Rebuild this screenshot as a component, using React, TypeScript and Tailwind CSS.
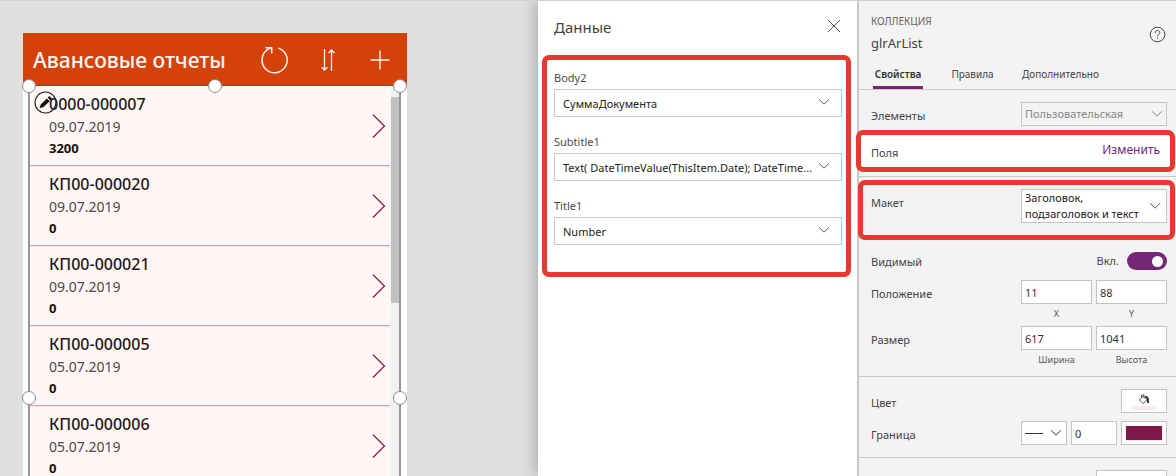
import React from "react";

const reports = [
  { number: "0000-000007", date: "09.07.2019", sum: "3200" },
  { number: "КП00-000020", date: "09.07.2019", sum: "0" },
  { number: "КП00-000021", date: "09.07.2019", sum: "0" },
  { number: "КП00-000005", date: "05.07.2019", sum: "0" },
  { number: "КП00-000006", date: "05.07.2019", sum: "0" },
];

const fields = [
  { id: "body2", label: "Body2", value: "СуммаДокумента" },
  { id: "subtitle1", label: "Subtitle1", value: "Text( DateTimeValue(ThisItem.Date); DateTime..." },
  { id: "title1", label: "Title1", value: "Number" },
];

function ChevronDown({ className }: { className: string }) {
  return (
    <svg className={className} width="12" height="8" viewBox="0 0 12 8" fill="none" stroke="currentColor" aria-hidden="true">
      <path d="M1 1.2 6 6.2 11 1.2" />
    </svg>
  );
}

function Handle({ className }: { className: string }) {
  return <span className={"absolute size-[14px] rounded-full border border-[#8a8a8a] bg-white " + className} />;
}

function PhoneHeader() {
  return (
    <header className="flex h-[52px] items-center bg-[#d4420a] pt-px pr-[17px] pl-[10px] text-[#fff4f2]">
      <h1 className="flex-1 text-[21px] leading-[30px] font-medium whitespace-nowrap">Авансовые отчеты</h1>
      <button type="button" aria-label="Обновить" className="mr-8">
        <svg width="28" height="28" viewBox="0 0 28 28" fill="none" stroke="currentColor" strokeWidth="1.5">
          <path d="M17.3 2.1A12.6 12.6 0 1 1 7.4 3.2L10.5 1.6" />
          <path d="M4.3 1.7H10.7V7.5" />
        </svg>
      </button>
      <button type="button" aria-label="Сортировать" className="mr-[35px]">
        <svg width="14" height="24" viewBox="0 0 14 24" fill="none" stroke="currentColor" strokeWidth="1.3">
          <path d="M3.5 1V22M.6 19.3 3.5 22.2 6.4 19.3" />
          <path d="M10.5 23V2M7.6 5 10.5 2 13.4 5" />
        </svg>
      </button>
      <button type="button" aria-label="Добавить">
        <svg width="20" height="20" viewBox="0 0 20 20" fill="none" stroke="currentColor" strokeWidth="1.4">
          <path d="M.5 10H19.5M10 .5V19.5" />
        </svg>
      </button>
    </header>
  );
}

function Gallery() {
  return (
    <div className="relative mr-[6px] ml-[5px] flex border-x-2 border-t border-x-[#969696] border-t-[#555] bg-[#fff6f5]">
      <ul className="flex-1">
        {reports.map((r) => (
          <li key={r.number} className="flex h-20 items-center border-b border-b-[#dd9fb8] pr-1 pl-[19px] shadow-[0_1px_0_#f6dfe6]">
            <div className="relative z-10 flex-1">
              <div className="text-[16px] leading-6 font-medium text-[#1e1b1b]">{r.number}</div>
              <div className="text-[14px] leading-[22px] text-[#4c4848]">{r.date}</div>
              <div className="text-[13px] leading-[21px] font-bold text-[#151313]">{r.sum}</div>
            </div>
            <button type="button" aria-label="Открыть">
              <svg width="14" height="24" viewBox="0 0 14 24" fill="none" stroke="#93265a" strokeWidth="1.4">
                <path d="M1 .8 12.4 12 1 23.4" />
              </svg>
            </button>
          </li>
        ))}
      </ul>
      <div className="w-[9px] bg-[#f1f1f1] pt-[11px]">
        <div className="ml-px h-[206px] bg-[#c1c1c1]" />
      </div>
      <svg className="absolute top-[5px] left-1" width="23" height="23" viewBox="0 0 23 23" aria-hidden="true">
        <circle cx="11.5" cy="11.5" r="10.5" fill="none" stroke="#222" strokeWidth="1.1" />
        <path d="M5.6 17.3 6.8 13.4 12.8 7.4 15.6 10.2 9.5 16.1Z M13.6 6.6 14.8 5.5Q15.4 5 16 5.6L17.4 7Q18 7.6 17.4 8.2L16.3 9.4Z" fill="#111" />
      </svg>
      <Handle className="-top-[7px] -left-[8px]" />
      <Handle className="-top-[7px] left-1/2 -ml-[7px]" />
      <Handle className="-top-[7px] -right-[8px]" />
      <Handle className="top-[305px] -left-[8px]" />
      <Handle className="top-[305px] -right-[8px]" />
    </div>
  );
}

function DataPanel() {
  return (
    <aside className="relative w-[319px] shrink-0 bg-white pr-[6px] pl-1 shadow-[-4px_0_14px_rgba(0,0,0,0.22)]">
      <div className="flex h-[54px] items-center justify-between pr-[10px] pb-[2px] pl-3">
        <h2 className="text-[15px] leading-6 text-[#444]">Данные</h2>
        <button type="button" aria-label="Закрыть" className="mb-[2px]">
          <svg width="14" height="14" viewBox="0 0 14 14" fill="none" stroke="#555">
            <path d="M1 1 13 13M13 1 1 13" />
          </svg>
        </button>
      </div>
      <div className="flex h-[222px] flex-col gap-4 rounded-[7px] border-5 border-[#e63a30] pt-[9px] pr-1 pl-[7px]">
        {fields.map((f) => (
          <div key={f.id}>
            <label htmlFor={f.id} className="block pb-[2px] text-[11px] leading-[18px] text-[#4a4a4a]">
              {f.label}
            </label>
            <div className="relative">
              <select
                id={f.id}
                className="block h-7 w-full appearance-none truncate border border-[#c8c8c8] bg-white pt-[2px] pr-5 pl-2 text-[11px] text-[#222]"
              >
                <option>{f.value}</option>
              </select>
              <ChevronDown className="pointer-events-none absolute top-[9px] right-3 text-[#555]" />
            </div>
          </div>
        ))}
      </div>
    </aside>
  );
}

function NumberBox({ id, label, value }: { id: string; label: string; value: string }) {
  return (
    <div className="flex-1">
      <input id={id} defaultValue={value} className="block h-6 w-full border border-[#c4c4c4] bg-white px-[3px] text-[11px] text-[#333]" />
      <label htmlFor={id} className="block pt-[2px] text-center text-[9px] leading-4 text-[#555]">
        {label}
      </label>
    </div>
  );
}

function Row({ label, children }: { label: React.ReactNode; children: React.ReactNode }) {
  return (
    <div className="flex">
      <div className="flex-1 pt-1 text-[11px] leading-5 text-[#444]">{label}</div>
      <div className="flex w-[146px] justify-end gap-1">{children}</div>
    </div>
  );
}

function PropertiesPanel() {
  return (
    <aside className="relative w-[319px] shrink-0 border-l-2 border-[#c8c8c8] bg-[#f3f3f3]">
      <div className="flex items-start justify-between pt-[10px] pr-[10px] pl-3">
        <div>
          <div className="text-[10px] leading-5 text-[#666]">КОЛЛЕКЦИЯ</div>
          <div className="pt-[2px] text-[13px] leading-5 text-[#444]">glrArList</div>
        </div>
        <button type="button" aria-label="Справка" className="mt-[15px]">
          <svg width="17" height="17" viewBox="0 0 17 17" fill="none" stroke="#444">
            <circle cx="8.5" cy="8.5" r="7.3" />
            <path d="M6.3 6.8C6.3 5.3 7.2 4.5 8.5 4.5S10.8 5.3 10.8 6.6C10.8 8.2 8.6 8.3 8.6 10.3M8.6 11.6V12.7" />
          </svg>
        </button>
      </div>
      <nav className="mt-[11px] flex items-start gap-[26px] border-b border-[#c8c8c8] pl-[14px] text-[10px] leading-5 text-[#444]">
        <button type="button" className="w-[50px] border-b-3 border-[#742774] pb-[2px] font-semibold whitespace-nowrap text-[#333]">Свойства</button>
        <button type="button" className="w-[47px] whitespace-nowrap">Правила</button>
        <button type="button" className="whitespace-nowrap">Дополнительно</button>
      </nav>
      <div className="pt-3 pr-[9px] pl-3">
        <Row label={<label htmlFor="items">Элементы</label>}>
          <div className="relative w-full">
            <select id="items" className="block h-6 w-full appearance-none border border-[#c4c4c4] bg-[#f3f3f3] pl-[3px] text-[11px] text-[#888]">
              <option>Пользовательская</option>
            </select>
            <ChevronDown className="pointer-events-none absolute top-[8px] right-1 text-[#888]" />
          </div>
        </Row>
      </div>
      <div className="relative mt-1 mr-px -ml-[3px] flex h-[42px] items-center justify-between rounded-[7px] border-5 border-[#e63a30] bg-white pr-[10px] pl-[10px]">
        <span className="pt-1 text-[11px] leading-5 text-[#444]">Поля</span>
        <a href="#fields" className="pb-[2px] text-[12px] leading-5 text-[#742774]">Изменить</a>
      </div>
      <hr className="mt-1 border-[#c8c8c8]" />
      <div className="relative mt-[3px] mr-px -ml-px h-[60px] rounded-[7px] border-5 border-[#e63a30] pt-1 pr-[3px] pl-2">
        <Row label={<label htmlFor="layout">Макет</label>}>
          <div className="relative w-full">
            <select
              id="layout"
              className="block h-[34px] w-full appearance-none border border-[#c4c4c4] bg-white pr-5 pl-[3px] text-[11px] leading-4 whitespace-pre-wrap text-[#222]"
            >
              <option>{"Заголовок,\nподзаголовок и текст"}</option>
            </select>
            <ChevronDown className="pointer-events-none absolute top-[13px] right-[6px] text-[#555]" />
          </div>
        </Row>
      </div>
      <div className="flex flex-col gap-1 pt-2 pr-[9px] pb-2 pl-3">
        <div className="pb-1">
          <Row label={<label htmlFor="visible">Видимый</label>}>
            <div className="flex items-center gap-2 pt-[2px]">
              <span className="text-[11px] leading-5 text-[#444]">Вкл.</span>
              <label className="flex h-[18px] w-10 items-center justify-end rounded-full bg-[#742774] pr-1">
                <input id="visible" type="checkbox" role="switch" defaultChecked className="size-[11px] appearance-none rounded-full bg-white" />
              </label>
            </div>
          </Row>
        </div>
        <Row label="Положение">
          <NumberBox id="x" label="X" value="11" />
          <NumberBox id="y" label="Y" value="88" />
        </Row>
        <Row label="Размер">
          <NumberBox id="width" label="Ширина" value="617" />
          <NumberBox id="height" label="Высота" value="1041" />
        </Row>
      </div>
      <div className="flex flex-col gap-2 border-y border-[#c8c8c8] pt-3 pr-[9px] pb-3 pl-3">
        <Row label="Цвет">
          <button type="button" aria-label="Цвет заливки" className="flex h-6 w-[46px] flex-col items-center border border-[#c4c4c4] bg-white pt-1">
            <svg width="12" height="11" viewBox="0 0 12 11" fill="none" stroke="#444" aria-hidden="true">
              <path d="M5 1.8 9 5.8 5.2 9.7 1.4 5.9ZM3.6 4V1.6Q3.6.6 4.8.6T6 1.6V4.6" strokeWidth=".9" />
              <path d="M7.2 2.5Q10 3.2 10 5.6V9" strokeWidth="1.8" stroke="#222" />
            </svg>
            <span className="mt-px h-[3px] w-6 bg-[#fdeceb] shadow-sm" />
          </button>
        </Row>
        <Row label="Граница">
          <button type="button" aria-label="Стиль границы" className="flex h-6 w-[46px] items-center justify-between border border-[#c4c4c4] bg-white pr-1 pl-[3px] text-[#333]">
            <span className="h-px w-[18px] bg-[#333]" />
            <ChevronDown className="" />
          </button>
          <input aria-label="Толщина границы" defaultValue="0" className="h-6 w-[46px] border border-[#c4c4c4] bg-white px-[3px] text-[11px] text-[#333]" />
          <button type="button" aria-label="Цвет границы" className="flex h-6 w-[46px] border border-[#c4c4c4] bg-white p-1">
            <span className="h-[14px] flex-1 bg-[#80184a] shadow-sm" />
          </button>
        </Row>
      </div>
      <div className="flex justify-end pt-3 pr-[9px]">
        <input aria-label="Отступ" className="h-6 w-[71px] border border-[#c4c4c4] bg-white" />
      </div>
    </aside>
  );
}

export default function App() {
  return (
    <div className="flex h-screen overflow-hidden border-t border-[#d0d0d0] bg-[#e0e0e0] font-['Noto_Sans','Open_Sans',sans-serif]">
      <main className="min-w-0 flex-1 pt-8 pl-[23px]">
        <div className="w-96 bg-white">
          <PhoneHeader />
          <Gallery />
        </div>
      </main>
      <DataPanel />
      <PropertiesPanel />
    </div>
  );
}
